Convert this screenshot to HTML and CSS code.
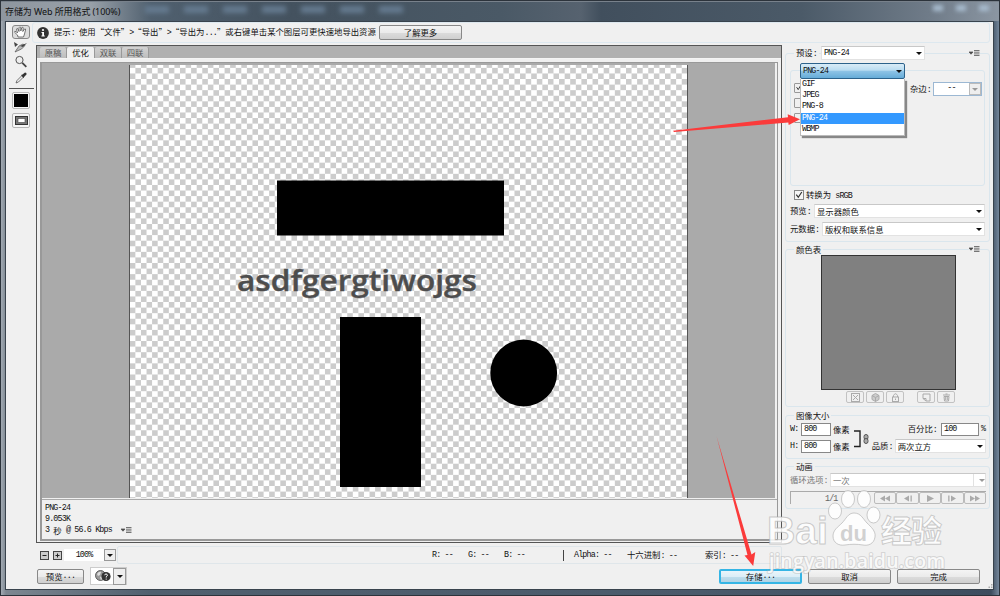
FILE: index.html
```html
<!DOCTYPE html>
<html lang="zh-CN">
<head>
  <meta charset="utf-8">
  <title>存储为 Web 所用格式</title>
  <link rel="stylesheet" href="styles.css">
</head>
<body>
  <div class="window">
    <div class="titlebar"><span class="title">存储为 Web 所用格式 (100%)</span>
      <div class="ghosts"><i></i><i></i><i></i><i></i><i></i><i></i><i></i></div>
      <div class="winbtns"><i></i><i></i><i></i></div>
    </div>

    <div class="client">
      <div class="tools">
        <div class="tool hand">
          <svg width="16" height="12" viewBox="0 0 16 12"><path d="M5 11 4.500 9 1.500 6.200Q1.500 4.800 3 5.500L4.500 7 3.500 3Q4 1.700 5 3L6 5.500V1.800Q7-.2 7.800 1.800V5L8.800 1.600Q10 .5 10.200 2L9.800 5.500 11.500 3Q13 2.500 12.500 4L11.500 8 10.500 11Z" fill="#fff" stroke="#555" stroke-width=".8"/></svg>
        </div>
        <svg class="tool" width="16" height="12" viewBox="0 0 16 12"><path d="M1 1 5 3.500 2 6Z" fill="#444"/><path d="M2 11 6 5 10 3 12 4.500 8.500 8Z" fill="#bbb" stroke="#555" stroke-width=".7"/><path d="M7 5 14 2 10 6Z" fill="#444"/></svg>
        <svg class="tool" width="14" height="14" viewBox="0 0 14 14"><circle cx="5.500" cy="5" r="3.600" fill="#eee" stroke="#555"/><path d="m8.300 7.800 4 4" stroke="#444" stroke-width="1.800"/></svg>
        <svg class="tool" width="14" height="14" viewBox="0 0 14 14"><path d="M2 12 3 9.500 8 4.500 9.500 6 4.500 11Z" fill="#eee" stroke="#555" stroke-width=".8"/><path d="m7 4 1.500-.5L11 1.500q2 .2 1.500 2L10 6l-.3 1.200Z" fill="#333"/></svg>
        <div class="line"></div>
        <div class="toolbtn"><div class="fg"></div></div>
        <div class="toolbtn second">
          <svg width="13" height="9" viewBox="0 0 13 9"><rect x=".5" y=".5" width="12" height="8" fill="#777" stroke="#333"/><rect x="3" y="2.500" width="7" height="4" fill="#fff" stroke="#444" stroke-width=".6"/></svg>
        </div>
      </div>

      <div class="content">
        <div class="tip">
          <svg width="12" height="12" viewBox="0 0 12 12"><circle cx="6" cy="6" r="5.900" fill="#333"/><circle cx="6" cy="3" r="1.100" fill="#fff"/><path d="M4.500 5H7v3.500h.8v1H4.400v-1h.8V6h-.7Z" fill="#fff"/></svg>
          <span class="tiphead">提示<b class="m">:</b></span>
          <span class="tiptext">使用“文件”<b class="m">&gt;</b>“导出”<b class="m">&gt;</b>“导出为<b class="m">...</b>”或右键单击某个图层可更快速地导出资源</span>
          <button class="btn more">了解更多</button>
        </div>

        <div class="middle">
          <div class="left">
            <div class="workspace">
              <div class="tabs">
                <div class="tab">原稿</div><div class="tab active">优化</div><div class="tab">双联</div><div class="tab">四联</div>
              </div>
              <div class="preview">
                <div class="canvas">
                  <svg class="doc" width="557" height="433" viewBox="0 0 557 433">
                    <defs>
                      <pattern id="checker" x="-.2" y="-2.700" width="11.150" height="11.150" patternUnits="userSpaceOnUse">
                        <rect width="11.150" height="11.150" fill="#fff"/>
                        <rect x="5.575" y="5.575" width="5.575" height="5.575" fill="#ccc"/>
                        <rect width="5.575" height="5.575" fill="#ccc"/>
                      </pattern>
                    </defs>
                    <rect width="558" height="433" fill="url(#checker)"/>
                    <rect x="147" y="115.500" width="227" height="55"/>
                    <rect x="210" y="252" width="81" height="170"/>
                    <circle cx="393.700" cy="308" r="33.400"/>
                    <text class="sample" x="107" y="226" textLength="240" lengthAdjust="spacingAndGlyphs">asdfgergtiwojgs</text>
                  </svg>
                </div>
                <div class="info">
                  <span class="m">PNG-24</span>
                  <span class="m">9.053K</span>
                  <span class="rate"><b class="m">3 </b>秒<b class="m"> @ 56.6 Kbps</b><svg class="menu" width="11" height="6" viewBox="0 0 11 6"><path d="M0 2h4L2 4.200Z"/><path d="M5 .5h5.500M5 2.200h5.500M5 3.900h5.500M5 5.500h5.500"/></svg></span>
                </div>
              </div>
            </div>

            <div class="status">
              <div class="zoom">
                <svg width="9" height="9" viewBox="0 0 9 9"><rect x=".5" y=".5" width="8" height="8" fill="#ccc" stroke="#444"/><path d="M2.500 4.500h4" stroke="#222"/></svg>
                <svg width="9" height="9" viewBox="0 0 9 9"><rect x=".5" y=".5" width="8" height="8" fill="#ccc" stroke="#444"/><path d="M2.500 4.500h4M4.500 2.500v4" stroke="#222"/></svg>
                <div class="zoomval m">100%</div>
                <div class="drop"><i class="arrow"></i></div>
              </div>
              <div class="readout">
                <span class="rgb m">R: --</span><span class="rgb m">G: --</span><span class="rgb m">B: --</span>
                <span class="alpha m">Alpha: --</span>
                <span class="hex">十六进制<b class="m">: --</b></span>
                <span>索引<b class="m">: --</b></span>
              </div>
            </div>
          </div>

          <div class="right">
            <div class="group preset">
              <div class="legendrow">
                <span class="legend">预设<b class="m">:</b></span>
                <div class="select presetsel m">PNG-24<i class="arrow"></i></div>
                <svg class="menu" width="11" height="6" viewBox="0 0 11 6"><path d="M0 2h4L2 4.200Z"/><path d="M5 .5h5.500M5 2.200h5.500M5 3.900h5.500M5 5.500h5.500"/></svg>
              </div>
              <div class="group format">
                <div class="formatwrap">
                  <div class="formatsel m">PNG-24<i class="arrow"></i></div>
                  <div class="options m"><div>GIF</div><div>JPEG</div><div>PNG-8</div><div class="on">PNG-24</div><div>WBMP</div></div>
                </div>
                <div class="formatbody">
                  <div class="checks"><svg class="check" width="10" height="10" viewBox="0 0 10 10"><path d="m2 4 2 3 3-5" fill="none" stroke="#333" stroke-width="1.200"/></svg><i class="check"></i><i class="check"></i></div>
                  <span class="matte">杂边<b class="m">:</b></span>
                  <div class="mattesel"><span class="m">--</span><div class="drop off"><i class="arrow"></i></div></div>
                </div>
              </div>
              <div class="row srgb">
                <svg width="10" height="10" viewBox="0 0 10 10"><rect x=".5" y=".5" width="9" height="9" fill="#f6f6f6" stroke="#888"/><path d="m2.300 4.600 2 2.700 3.500-5.300" fill="none" stroke="#333" stroke-width="1.200"/></svg>
                <span>转换为<b class="m"> sRGB</b></span>
              </div>
              <div class="row field"><span class="l1">预览<b class="m">:</b></span><div class="select grow">显示器颜色<i class="arrow"></i></div></div>
              <div class="row field"><span class="l2">元数据<b class="m">:</b></span><div class="select grow">版权和联系信息<i class="arrow"></i></div></div>
            </div>

            <div class="group colors">
              <div class="legendrow">
                <span class="legend">颜色表</span>
                <svg class="menu" width="11" height="6" viewBox="0 0 11 6"><path d="M0 2h4L2 4.200Z"/><path d="M5 .5h5.500M5 2.200h5.500M5 3.900h5.500M5 5.500h5.500"/></svg>
              </div>
              <div class="swatch"></div>
              <div class="mini">
                <div><svg width="9" height="9" viewBox="0 0 9 9"><rect x=".5" y=".5" width="8" height="8"/><path d="m2 2 5 5M7 2 2 7"/></svg></div>
                <div><svg width="9" height="9" viewBox="0 0 9 9"><path class="cube" d="m4.500.5 3.500 2v4l-3.500 2-3.500-2v-4Z"/><path d="m1 2.500 3.500 2 3.500-2M4.500 4.500v4"/></svg></div>
                <div><svg width="9" height="9" viewBox="0 0 9 9"><path d="M2.500 4V2.500q2-3.500 4 0V4"/><rect x="1.500" y="4" width="6" height="4.500"/><path d="M4.500 5.500v1.500"/></svg></div>
                <div class="gap"><svg width="9" height="9" viewBox="0 0 9 9"><path d="M1 1h7v7H4L1 5.500ZM4 8V5.500H1"/></svg></div>
                <div><svg width="9" height="9" viewBox="0 0 9 9"><path d="M1 2h7M3.500 1h2M2 3.500 2.500 8h4L7 3.500ZM3.700 4v3M5.300 4v3"/></svg></div>
              </div>
            </div>

            <div class="group size">
              <div class="legendrow"><span class="legend">图像大小</span></div>
              <div class="sizebody">
                <div class="dims">
                  <div class="row"><span class="wh m">W:</span><div class="input m">800</div><span>像素</span></div>
                  <div class="row"><span class="wh m">H:</span><div class="input m">800</div><span>像素</span></div>
                </div>
                <svg class="link" width="17" height="20" viewBox="0 0 17 20"><path d="M0 2h6v15.500H0" fill="none" stroke="#222" stroke-width="1.400"/><g fill="#aaa" stroke="#555"><rect x="10" y="5.500" width="4" height="5" rx="2"/><rect x="10" y="9.500" width="4" height="5" rx="2"/></g></svg>
                <div class="scale">
                  <div class="row pct"><span>百分比<b class="m">:</b></span><div class="input wide m">100</div><span class="m">%</span></div>
                  <div class="row quality"><span>品质<b class="m">:</b></span><div class="select grow">两次立方<i class="arrow"></i></div></div>
                </div>
              </div>
            </div>

            <div class="group anim">
              <div class="legendrow"><span class="legend">动画</span></div>
              <div class="row loop"><span>循环选项<b class="m">:</b></span><div class="select grow">一次<div class="drop off"><i class="arrow"></i></div></div></div>
              <div class="frames">
                <span class="m count">1/1</span>
                <div class="player">
                  <div><svg width="12" height="7" viewBox="0 0 12 7"><path d="M6 .5v6l-5-3ZM11 .5v6l-5-3Z"/></svg></div>
                  <div><svg width="12" height="7" viewBox="0 0 12 7"><path d="M7 .5v6l-5-3ZM8.500.5h1.300v6H8.500Z"/></svg></div>
                  <div><svg width="12" height="7" viewBox="0 0 12 7"><path d="M3 0v7l7-3.500Z"/></svg></div>
                  <div><svg width="12" height="7" viewBox="0 0 12 7"><path d="M5 .5v6l5-3ZM2.200.5h1.300v6H2.200Z"/></svg></div>
                  <div><svg width="12" height="7" viewBox="0 0 12 7"><path d="M1 .5v6l5-3ZM6 .5v6l5-3Z"/></svg></div>
                </div>
              </div>
            </div>
          </div>
        </div>

        <div class="actions">
          <button class="btn small">预览<b class="m">...</b></button>
          <div class="browser">
            <svg width="16" height="12" viewBox="0 0 16 12"><circle cx="5.500" cy="5.500" r="5" fill="#999" stroke="#444" stroke-width=".8"/><path d="M2 4q2-3 4-2l-1 3-2 1ZM5 7l2-1v3l-1 1Z" fill="#ddd"/><circle cx="11" cy="6.500" r="4.600" fill="#333"/><path d="M9.700 5.200q.2-1.300 1.400-1.200t1.300 1.200q0 .8-1.200 1.600v.7M11.200 8.600v1" fill="none" stroke="#fff" stroke-width="1"/></svg>
            <div class="drop"><i class="arrow"></i></div>
          </div>
          <button class="btn save">存储<b class="m">...</b></button>
          <button class="btn">取消</button>
          <button class="btn">完成</button>
        </div>
      </div>
    </div>

    <!-- watermark and pointer arrows lie over the dialog -->
    <svg class="overlay" width="1000" height="596" viewBox="0 0 1000 596">
      <g class="mark">
        <text x="767" y="544" font-size="38" textLength="61" lengthAdjust="spacingAndGlyphs">Bai</text>
        <ellipse cx="835" cy="511" rx="6.500" ry="8"/>
        <ellipse cx="848" cy="499" rx="6.500" ry="8.500"/>
        <ellipse cx="864" cy="499" rx="6.500" ry="8.500"/>
        <ellipse cx="873.500" cy="515" rx="6.500" ry="8"/>
        <path d="M854 513c7 0 9 6 13 10s9 8 8 14c-1 7-7 9-12 8-6-1-12-1-18 0-6 1-12-2-12-9 0-6 5-9 9-13s6-10 12-10Z"/>
        <text class="du" x="840" y="541" font-size="22" textLength="27" lengthAdjust="spacingAndGlyphs">du</text>
        <text class="jy" x="881" y="542" font-size="31" textLength="61">经验</text>
        <text class="url" x="769" y="568" font-size="19.500" textLength="176">jingyan.baidu.com</text>
      </g>
      <path class="red" d="M673 130.800 788 117.300 787.700 114.300 800 119.200 788.700 125 788.300 122.500 674 132Z"/>
      <path class="red" d="M716.500 436 751.500 554.500 755.300 552 753.200 566 744.500 555.500 747.500 555Z"/>
      <g fill="#aaa"><path d="M991 584h1.500v1.500H991ZM988.500 586.500h1.500v1.500h-1.500ZM991 586.500h1.500v1.500H991Z"/></g>
    </svg>
  </div>
</body>
</html>
```

FILE: styles.css
```css
* { box-sizing: border-box; }
body { margin: 0; font: 8.37px/11px "Noto Sans CJK SC", sans-serif; color: #111; }
svg { display: block; flex: none; }
.m { font-family: "Liberation Mono", monospace; font-weight: normal; letter-spacing: -0.84px; white-space: pre; }

/* window frame */
.window { position: relative; width: 1000px; height: 596px; overflow: hidden; padding: 0 5px 5px 4px; display: flex; flex-direction: column; border: 1px solid #2c333b; background: linear-gradient(90deg, #a2aab3 0, #7d8791 5px, #50606f 150px, #4a5a6b 700px, #3d4d5f 990px, #74869a 100%); }
.titlebar { display: flex; align-items: center; height: 20px; margin: 0 -5px 0 -4px; padding-left: 4px; background: linear-gradient(90deg, #8e969f 0, #98a0a8 90px, #50606f 150px, #44525f 290px, #4a5966 500px, #56626f 580px, #414f5d 600px, #4b5a68 800px, #707c89 930px, #8b96a2 100%); border-top: 1px solid #78818b; }
.title { font: 9px/14px "Noto Sans", "Noto Sans CJK SC", sans-serif; width: 140px; white-space: nowrap; letter-spacing: -0.1px; }
.ghosts { display: flex; gap: 15px; filter: blur(2.5px); }
.ghosts i { width: 24px; height: 7px; margin-bottom: 4px; background: #657b90; }
.winbtns { display: flex; gap: 13px; margin-left: 530px; filter: blur(2px); }
.winbtns i { width: 10px; height: 6px; margin-bottom: 8px; background: #a8bccf; }
.client { display: flex; flex: 1; border: 1px solid #39434d; background: #f0f0f0; min-height: 0; }

/* tool strip */
.tools { width: 30px; display: flex; flex-direction: column; align-items: center; padding-top: 3px; }
.tool { margin-top: 2px; }
.tool.hand { width: 18px; height: 14px; margin: 0; display: flex; align-items: center; justify-content: center; border: 1px solid #888; border-radius: 3px; background: #ddd; }
.line { width: 25px; height: 1px; margin: 3px 0; background: #555; }
.toolbtn { width: 18px; height: 17px; display: flex; align-items: center; justify-content: center; border: 1px solid #b5b5b5; border-radius: 2px; background: #f6f6f6; }
.toolbtn.second { height: 15px; margin-top: 4px; }
.fg { width: 14px; height: 13px; background: #000; }

.content { flex: 1; min-width: 0; display: flex; flex-direction: column; }
.tip { display: flex; align-items: center; height: 21px; margin: 0 3px 2px -4px; padding-left: 4px; border: 1px solid #dde8ef; border-radius: 3px; }
.tiphead { width: 25px; margin-left: 5px; }
.tiptext { white-space: nowrap; width: 300px; }
.btn { display: flex; align-items: center; justify-content: center; width: 83px; height: 15px; padding: 0; font: inherit; color: #111; border: 1px solid #888; border-radius: 2px; background: linear-gradient(#f4f4f4 0, #ebebeb 50%, #dcdcdc 51%, #cfcfcf); }

/* preview area */
.middle { display: flex; height: 519px; }
.left { width: 746px; }
.workspace { height: 498px; border: 1px solid #555; background: #f0f0f0; }
.tabs { display: flex; height: 13px; padding: 1px 0 0 3px; background: #b0b0b0; border-bottom: 1px solid #f4f4f4; }
.tab { width: 27px; color: #555; text-align: center; line-height: 11px; background: linear-gradient(#d2d2d2, #bdbdbd); border-right: 1px solid #999; border-radius: 2px 2px 0 0; overflow: hidden; }
.tab.active { width: 28px; color: #111; background: #f0f0f0; }
.preview { height: 479px; margin: 3px 3px 0 3px; border: 2px solid #999; border-width: 1px 1px 2px 2px; }
.canvas { height: 435px; margin-right: 2px; padding-top: 2px; display: flex; padding-left: 88px; background: #aaa; }
.doc { box-sizing: content-box; border: solid #555; border-width: 0 1px; margin-left: -1px; }
.sample { font: 600 28px "Open Sans", sans-serif; fill: #4d4d4d; stroke: #4d4d4d; stroke-width: .4px; }
.info { display: flex; flex-direction: column; height: 40px; margin-top: 1px; padding: 3px 0 0 3px; border-top: 1px solid #aaa; }
.info > span { height: 10.8px; }
.info .m { line-height: 11px; }
.info .rate { display: flex; align-items: center; line-height: 8px; }
.menu path { fill: #444; stroke: #555; stroke-width: .8; }
.rate .menu { margin-left: 9px; }

.status { display: flex; margin-top: 3px; height: 18px; }
.zoom { display: flex; align-items: center; width: 81px; gap: 4px; padding-left: 4px; }
.zoomval { width: 40px; height: 12px; margin: 0 -4px 0 -2px; background: #fff; text-align: center; line-height: 12px; }
.drop { display: flex; align-items: center; justify-content: center; width: 12px; height: 12px; border: 1px solid #999; background: #eee; }
.arrow { border: 3px solid transparent; border-top: 3.500px solid #111; border-bottom: 0; }
.drop.off { border-color: #bbb; }
.off .arrow { border-top-color: #999; }
.readout { flex: 1; display: flex; align-items: center; padding-left: 314px; border: 1px solid #dfe6ea; border-radius: 2px; }
.rgb { width: 36px; }
.alpha { width: 64px; margin-left: 23px; padding-left: 10px; border-left: 1px solid #444; }
.hex { width: 78px; }

/* settings column */
.right { width: 205px; margin-left: 3px; padding-top: 8px; }
.group { border: 1px solid #dae6ed; border-radius: 3px; }
.legendrow { display: flex; align-items: center; height: 14px; margin-top: -8px; }
.legend { margin-left: 8px; padding: 0 2px; background: #f0f0f0; }
.legendrow .menu { margin: 0 9px 0 auto; background: #f0f0f0; }
.select { position: relative; display: flex; align-items: center; height: 14px; padding: 0 2px; background: #fff; border: 1px solid #e2e2e2; border-top-color: #c8c8c8; }
.select .arrow { margin-left: auto; }
.select .drop { margin: 0 -2px 0 auto; border-width: 0 0 0 1px; border-color: #e2e2e2; background: none; }
.grow { flex: 1; }
.row { display: flex; align-items: center; }
.preset { height: 189px; padding-right: 4px; }
.presetsel { width: 104px; margin-left: 2px; }
.preset > .legendrow { margin-right: -4px; }
.format { height: 116px; margin: 10px 0 0 4px; }
.formatwrap { position: relative; width: 105px; margin: -8px 0 0 9px; }
.formatsel { display: flex; align-items: center; height: 16px; padding: 0 2px; border: 1px solid #2c628b; border-radius: 2px; background: linear-gradient(#d9ecf7 0, #b9dcf1 45%, #8fc4e6 50%, #66acd8); }
.formatsel .arrow { margin-left: auto; }
.options { position: absolute; z-index: 2; left: 0; top: 16px; width: 105px; height: 57px; background: #fff; border: 1px solid #bbb; border-top: 0; box-shadow: 2px 2px 1px #888; }
.options div { height: 11.200px; padding-left: 1px; line-height: 10px; }
.options .on { color: #fff; background: #3399ff; }
.formatbody { display: flex; margin-top: 3px; }
.checks { display: flex; flex-direction: column; gap: 5px; width: 119px; padding: 1px 0 0 3px; }
.check { width: 10px; height: 10px; border: 1px solid #999; border-radius: 1px; }
.matte { width: 23px; line-height: 12px; }
.mattesel { display: flex; width: 49px; height: 14px; border: 1px solid #9cb8d3; background: #fff; }
.mattesel .m { flex: 1; text-align: center; }
.srgb { height: 12px; margin: 3px 0 3px 8px; gap: 2px; }
.field { margin: 0 0 4px 4px; }
.l1 { width: 24px; }
.l2 { width: 32px; }
.colors { height: 158px; margin-top: 7px; }
.colors .legendrow { margin-bottom: -1px; }
.swatch { width: 135px; height: 135px; margin: 0 0 0 35px; background: #808080; border: 1px solid #333; }
.mini { display: flex; gap: 2px; margin: 1px 0 0 60px; }
.mini div { display: flex; align-items: center; justify-content: center; width: 18px; height: 12px; border: 1px solid #c2c2c2; border-radius: 2px; }
.mini .gap { margin-left: 11px; }
.mini path, .mini rect { fill: none; stroke: #aaa; }
.mini .cube { fill: #ccc; }
.size { height: 44px; margin-top: 8px; }
.sizebody { display: flex; padding: 0 0 0 4px; }
.size .legend, .anim .legend { line-height: 10px; }
.dims, .scale { display: flex; flex-direction: column; gap: 3px; }
.dims .row { height: 14px; }
.wh { width: 11px; }
.input { width: 30px; height: 13px; margin-right: 2px; padding-left: 2px; line-height: 11px; border: 1px solid #888; background: #fff; }
.input.wide { width: 38px; margin-left: 4px; }
.link { margin: 7px 0 0 4px; }
.scale { flex: 1; padding: 0 3px 0 1px; }
.pct { height: 14px; padding-left: 36px; white-space: nowrap; }
.quality span { width: 23px; }
.anim { height: 43px; margin-top: 7px; padding-right: 3px; }
.loop { margin: 0 0 4px 4px; color: #777; }
.loop span { width: 40px; }
.frames { display: flex; height: 13px; margin-left: 4px; border: solid #aaa; border-width: 1px 0 0 1px; }
.count { width: 83px; padding-left: 34px; color: #666; line-height: 14px; }
.player { display: flex; flex: 1; }
.player div { display: flex; flex: 1; align-items: center; justify-content: center; border: 1px solid #bbb; border-radius: 2px; }
.player path { fill: #aaa; }

.actions { display: flex; align-items: center; height: 18px; margin-top: 3px; gap: 6px; padding-left: 1px; }
.small { width: 47px; }
.browser { display: flex; align-items: center; width: 37px; height: 18px; padding-left: 4px; background: #fff; border: 1px solid #ccc; }
.browser .drop { height: 17px; width: 13px; margin-left: auto; }
.save { margin-left: 586px; border: 2px solid #35b5e5; background: linear-gradient(#e9f5fb 0, #dceef7 50%, #c0dfee 51%, #b0d3e5); }

.overlay { position: absolute; left: -1px; top: -1px; z-index: 5; }
.mark { fill: #fff; fill-opacity: .85; stroke: #aaa; stroke-opacity: .6; stroke-width: 1px; font-family: "Liberation Sans", sans-serif; font-weight: bold; }
.mark .du { fill: #c9c9c9; stroke: none; }
.mark .jy { font-family: "Noto Sans CJK SC", sans-serif; }
.mark .url { font-weight: 600; font-family: "Open Sans", sans-serif; paint-order: stroke; stroke-width: 2px; stroke-opacity: .4; }
.red { fill: #fb3b3b; }
```
